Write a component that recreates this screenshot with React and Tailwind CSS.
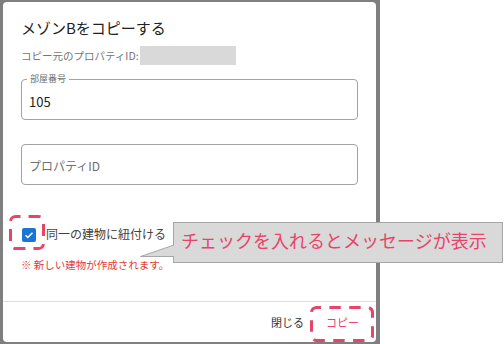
import React from "react";

export default function App() {
  return (
    <div
      className="relative w-[504px] h-[344px] flex bg-white overflow-hidden"
      style={{ fontFamily: '"Noto Sans CJK JP", "Noto Sans", sans-serif' }}
    >
      <div className="w-[380px] h-full bg-[#7f7f7f] pl-[3px] pt-[2px] shrink-0">
        <div className="w-[373px] h-[340px] bg-white rounded-[4px] flex flex-col">
          <div className="flex-1 flex flex-col px-[18px] pt-[14px]">
            <div className="h-[24px] leading-[24px] text-[15px] font-normal text-[#212121]">
              メゾンBをコピーする
            </div>
            <div className="mt-[6px] h-[19px] flex items-center">
              <span className="text-[10.5px] leading-[16px] text-[#757575]">コピー元のプロパティID:</span>
              <span className="ml-[1px] w-[96px] h-[19px] bg-[#d9d9d9]"></span>
            </div>
            <div className="relative mt-[14px] h-[41px] border border-[#a3a3a3] rounded-[4px] flex items-center pl-[7px] pt-[4px]">
              <span className="absolute left-[5px] top-[-7px] px-[3px] bg-white text-[9px] leading-[12px] text-[#707070]">
                部屋番号
              </span>
              <span className="text-[13px] leading-[18px] text-[#212121]">105</span>
            </div>
            <div className="mt-[24px] h-[41px] border border-[#a3a3a3] rounded-[4px] flex items-center pl-[7px] pt-[3px]">
              <span className="text-[12px] leading-[18px] text-[#707070]">プロパティID</span>
            </div>
            <div className="mt-[39px] h-[20px] flex items-center pl-[1px]">
              <span className="w-[14px] h-[14px] rounded-[2px] bg-[#1976d2] flex items-center justify-center mt-[1px]">
                <svg width="12" height="12" viewBox="0 0 24 24">
                  <path d="M5 12.5l4.5 4.5L19 7.5" fill="none" stroke="white" strokeWidth="3" />
                </svg>
              </span>
              <span className="ml-[10px] text-[12px] leading-[18px] text-[#424242]">同一の建物に紐付ける</span>
            </div>
            <div className="mt-[14px] text-[10.5px] leading-[14px] text-[#e53935]">※ 新しい建物が作成されます。</div>
          </div>
          <div className="h-[41px] border-t border-[#e0e0e0] flex items-center justify-end pr-[17px] gap-[22px]">
            <span className="text-[11px] leading-[16px] text-[#333]">閉じる</span>
            <span className="text-[11px] leading-[16px] text-[#ec407a]">コピー</span>
          </div>
        </div>
      </div>
      <div className="flex-1" />

      {/* annotation: dashed highlight around checkbox */}
      <svg className="absolute left-[9px] top-[215px]" width="36" height="35" viewBox="0 0 36 35">
        <rect
          x="1.5"
          y="1.5"
          width="33"
          height="32"
          rx="5"
          fill="none"
          stroke="#e8436a"
          strokeWidth="3"
          pathLength="120"
          strokeDasharray="12 8"
          strokeDashoffset="7"
        />
      </svg>
      {/* annotation: dashed highlight around copy button */}
      <svg className="absolute left-[310px] top-[306px]" width="64" height="36" viewBox="0 0 64 36">
        <rect
          x="1.5"
          y="1.5"
          width="61"
          height="33"
          rx="5"
          fill="none"
          stroke="#e8436a"
          strokeWidth="3"
          pathLength="180"
          strokeDasharray="11.5 8.5"
          strokeDashoffset="7"
        />
      </svg>

      {/* callout */}
      <div className="absolute left-[173px] top-[222px] w-[330px] h-[41px] bg-[#d9d9d9] border border-[#a6a6a6] flex items-center pl-[7px] pb-[5px]">
        <span className="text-[18px] leading-[24px] text-[#e8436a] whitespace-nowrap">チェックを入れるとメッセージが表示</span>
      </div>
      <svg className="absolute left-[140px] top-[244px]" width="35" height="14" viewBox="0 0 35 14">
        <polygon points="0.5,12.5 35,1 35,12.5" fill="#d9d9d9" />
        <polyline points="34,1 0.5,12.5 34,12.5" fill="none" stroke="#a6a6a6" strokeWidth="1" />
      </svg>
    </div>
  );
}
